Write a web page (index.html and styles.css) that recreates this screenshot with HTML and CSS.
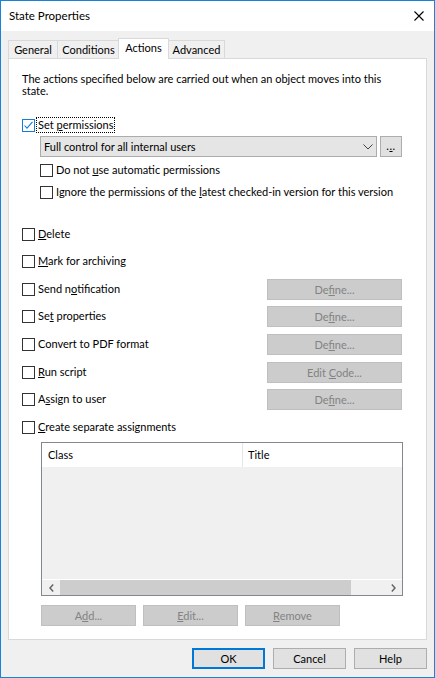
FILE: index.html
```html
<!DOCTYPE html>
<html>
<head>
<meta charset="utf-8">
<title>State Properties</title>
<link rel="stylesheet" href="styles.css">
</head>
<body>
<div class="window">
  <div class="titlebar">
    <span class="title">State Properties</span>
    <svg class="close" width="10" height="10" viewBox="0 0 10 10"><path d="M0.5 0.5 L9.5 9.5 M9.5 0.5 L0.5 9.5" stroke="#000" stroke-width="1.1" fill="none"/></svg>
  </div>
  <div class="content">
    <div class="tabs">
      <div class="tab tab-general">General</div>
      <div class="tab tab-conditions">Conditions</div>
      <div class="tab tab-actions active">Actions</div>
      <div class="tab tab-advanced">Advanced</div>
    </div>
    <div class="panel">
      <p class="intro">The actions specified below are carried out when an object moves into this<br>state.</p>

      <div class="perm-row">
        <span class="box checked"><svg width="11" height="11" viewBox="0 0 11 11"><path d="M1.5 5.5 L4 8.2 L9.5 1.8" stroke="#1a7bd6" stroke-width="1.1" fill="none"/></svg></span>
        <span class="focus-label">Set <u>p</u>ermissions</span>
      </div>

      <div class="combo-row">
        <div class="combo">
          <span>Full control for all internal users</span>
          <svg width="10" height="6" viewBox="0 0 10 6"><path d="M0.5 0.5 L5 5 L9.5 0.5" stroke="#444" stroke-width="1" fill="none"/></svg>
        </div>
        <div class="btn dots"><span>.<u>.</u>.</span></div>
      </div>

      <div class="opt sub sub-first"><span class="box"></span><span class="lbl">Do not <u>u</u>se automatic permissions</span></div>
      <div class="opt sub sub-second"><span class="box"></span><span class="lbl">Ignore the permissions of the <u>l</u>atest checked-in version for this version</span></div>

      <div class="opt group-start"><span class="box"></span><span class="lbl"><u>D</u>elete</span></div>
      <div class="opt tight"><span class="box"></span><span class="lbl"><u>M</u>ark for archiving</span></div>
      <div class="opt"><span class="box"></span><span class="lbl">Send n<u>o</u>tification</span><span class="btn disabled define"><span>De<u>f</u>ine...</span></span></div>
      <div class="opt tight"><span class="box"></span><span class="lbl">Se<u>t</u> properties</span><span class="btn disabled define"><span>De<u>f</u>ine...</span></span></div>
      <div class="opt"><span class="box"></span><span class="lbl">Convert to PDF format</span><span class="btn disabled define"><span>De<u>f</u>ine...</span></span></div>
      <div class="opt"><span class="box"></span><span class="lbl"><u>R</u>un script</span><span class="btn disabled define"><span>Edit <u>C</u>ode...</span></span></div>
      <div class="opt tight"><span class="box"></span><span class="lbl">A<u>s</u>sign to user</span><span class="btn disabled define"><span>De<u>f</u>ine...</span></span></div>
      <div class="opt"><span class="box"></span><span class="lbl"><u>C</u>reate separate assignments</span></div>

      <div class="list">
        <div class="list-head">
          <div class="col col-class">Class</div>
          <div class="col col-title">Title</div>
        </div>
        <div class="list-body"></div>
        <div class="hscroll">
          <span class="arrow arrow-left"><svg width="5" height="8" viewBox="0 0 5 8"><path d="M4.2 0.6 L1 4 L4.2 7.4" stroke="#606060" stroke-width="1.4" fill="none"/></svg></span>
          <span class="thumb"></span>
          <span class="track-rest"></span>
          <span class="arrow arrow-right"><svg width="5" height="8" viewBox="0 0 5 8"><path d="M0.8 0.6 L4 4 L0.8 7.4" stroke="#606060" stroke-width="1.4" fill="none"/></svg></span>
        </div>
      </div>

      <div class="list-buttons">
        <span class="btn disabled wide"><span>A<u>d</u>d...</span></span>
        <span class="btn disabled wide"><span><u>E</u>dit...</span></span>
        <span class="btn disabled wide"><span><u>R</u>emove</span></span>
      </div>
    </div>

    <div class="dialog-buttons">
      <span class="btn dlg default">OK</span>
      <span class="btn dlg">Cancel</span>
      <span class="btn dlg">Help</span>
    </div>
  </div>
</div>
</body>
</html>
```
FILE: styles.css
```css
html, body {
  margin: 0;
  padding: 0;
  background: #f0f0f0;
}

body {
  font-family: Lato, "Segoe UI", sans-serif;
  font-size: 11px;
  color: #000;
}

u {
  text-decoration: underline;
  text-underline-offset: 1px;
}

.window {
  width: 435px;
  height: 678px;
  box-sizing: border-box;
  border: 1px solid #1883d7;
  background: #f0f0f0;
  display: flex;
  flex-direction: column;
}

.titlebar {
  height: 30px;
  flex: none;
  background: #fff;
  display: flex;
  align-items: center;
  justify-content: space-between;
  padding: 0 10px 0 8px;
}

.title {
  font-size: 11.5px;
  line-height: 16px;
}

.content {
  flex: 1;
  display: flex;
  flex-direction: column;
  padding: 7px 7px 8px 7px;
}

/* Tabs */
.tabs {
  display: flex;
  align-items: flex-end;
  height: 20px;
  flex: none;
}

.tab {
  box-sizing: border-box;
  height: 18px;
  border: 1px solid #d9d9d9;
  border-bottom: none;
  background: #f0f0f0;
  text-align: center;
  line-height: 16px;
  padding-top: 1px;
  margin-left: -1px;
  white-space: nowrap;
}

.tab-general { width: 50px; margin-left: 0; }
.tab-conditions { width: 63px; }
.tab-actions { width: 51px; }
.tab-advanced { width: 57px; }

.tab.active {
  height: 21px;
  margin-bottom: -1px;
  margin-left: -2px;
  background: #fff;
  position: relative;
  z-index: 2;
  padding-top: 1px;
}

/* Panel */
.panel {
  box-sizing: border-box;
  height: 582px;
  flex: none;
  border: 1px solid #d9d9d9;
  background: #fff;
  padding: 0 24px 0 13px;
  display: flex;
  flex-direction: column;
}

.intro {
  margin: 14px 0 0;
  line-height: 12px;
  white-space: nowrap;
}

.box {
  box-sizing: border-box;
  width: 13px;
  height: 13px;
  flex: none;
  border: 1px solid #333;
  background: #fff;
  display: flex;
  align-items: center;
  justify-content: center;
}

.box.checked {
  border-color: #1a7bd6;
}

.perm-row {
  display: flex;
  align-items: flex-start;
  height: 16px;
  margin-top: 20px;
}

.perm-row .box {
  margin-top: 2px;
}

.focus-label {
  box-sizing: border-box;
  height: 16px;
  line-height: 13px;
  border: 1px dotted #000;
  padding: 0 1px 1px 1px;
  margin-left: 1px;
  white-space: nowrap;
}

.combo-row {
  display: flex;
  align-items: center;
  height: 21px;
  margin: 3px 0 0 18px;
}

.combo {
  box-sizing: border-box;
  width: 338px;
  height: 21px;
  border: 1px solid #acacac;
  background: #e5e5e5;
  display: flex;
  align-items: center;
  justify-content: space-between;
  padding: 0 3px 0 3px;
  white-space: nowrap;
}

.combo svg {
  margin-top: 1px;
}

.btn {
  box-sizing: border-box;
  height: 21px;
  border: 1px solid #adadad;
  background: #e1e1e1;
  display: flex;
  align-items: center;
  justify-content: center;
  white-space: nowrap;
  flex: none;
}

.btn.dots {
  width: 22px;
  margin-left: 3px;
  letter-spacing: 0.5px;
  padding-bottom: 2px;
}

.btn.disabled {
  background: #cccccc;
  border-color: #bfbfbf;
  color: #838383;
}

.opt {
  display: flex;
  align-items: center;
  height: 21px;
  margin-top: 7px;
}

.opt.tight {
  margin-top: 6px;
}

.opt.sub {
  margin-left: 18px;
}

.opt.sub-first {
  margin-top: 3px;
}

.opt.sub-second {
  margin-top: 1px;
}

.opt.group-start {
  margin-top: 21px;
}

.lbl {
  margin-left: 3px;
  margin-top: -2px;
  white-space: nowrap;
  flex: 1;
}

.btn.define {
  width: 135px;
}

/* List */
.list {
  box-sizing: border-box;
  width: 362px;
  height: 154px;
  margin: 4px 0 0 19px;
  border: 1px solid #828790;
  background: #f0f0f0;
  display: flex;
  flex-direction: column;
  flex: none;
}

.list-head {
  height: 24px;
  flex: none;
  background: #fff;
  display: flex;
}

.col {
  line-height: 24px;
  box-sizing: border-box;
}

.col-class {
  width: 201px;
  border-right: 1px solid #e5e5e5;
  padding-left: 6px;
}

.col-title {
  flex: 1;
  padding-left: 5px;
}

.list-body {
  flex: 1;
  border-bottom: 1px solid #fff;
}

.hscroll {
  height: 15px;
  flex: none;
  display: flex;
  align-items: stretch;
}

.arrow {
  width: 18px;
  display: flex;
  align-items: center;
  justify-content: center;
  flex: none;
}

.arrow-right {
  width: 17px;
}

.thumb {
  width: 291px;
  background: #cdcdcd;
  flex: none;
}

.track-rest {
  flex: 1;
}

.list-buttons {
  display: flex;
  gap: 7px;
  margin: 9px 0 0 19px;
}

.btn.wide {
  width: 95px;
}

/* Dialog buttons */
.dialog-buttons {
  display: flex;
  justify-content: flex-end;
  gap: 8px;
  margin-top: 8px;
}

.btn.dlg {
  width: 73px;
}

.btn.default {
  border: 2px solid #0078d7;
}
```
